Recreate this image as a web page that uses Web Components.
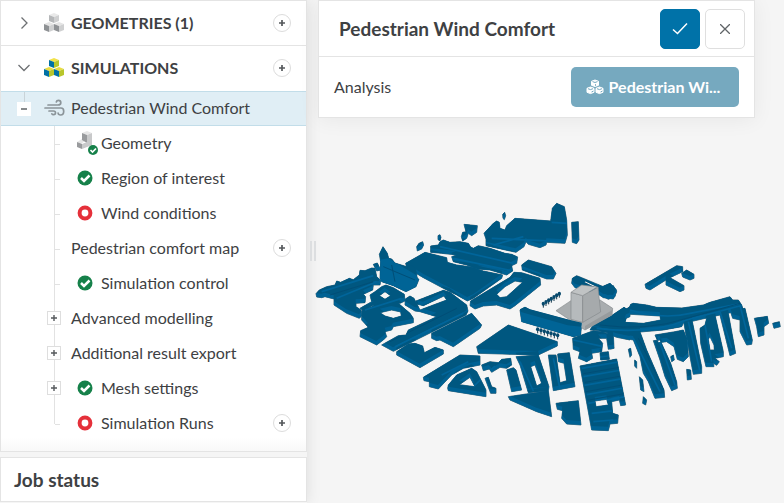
<!DOCTYPE html>
<html lang="en">
<head>
<meta charset="utf-8">
<title>Pedestrian Wind Comfort</title>
<style>
html, body { height: 100%; }
body { margin: 0; background: #f5f5f5; color: #3e4143; font: 16px/20px Lato, "Liberation Sans", sans-serif; }
</style>
</head>
<body>
<sim-workbench>
  <side-panel slot="side">
    <tree-section label="GEOMETRIES (1)" icon="cubes-grey" add></tree-section>
    <tree-section label="SIMULATIONS" icon="cubes-color" open add>
      <tree-row label="Pedestrian Wind Comfort" icon="wind" toggle="minus" root></tree-row>
      <tree-row label="Geometry" icon="geometry"></tree-row>
      <tree-row label="Region of interest" icon="ok"></tree-row>
      <tree-row label="Wind conditions" icon="todo"></tree-row>
      <tree-row label="Pedestrian comfort map" add></tree-row>
      <tree-row label="Simulation control" icon="ok"></tree-row>
      <tree-row label="Advanced modelling" toggle="plus"></tree-row>
      <tree-row label="Additional result export" toggle="plus"></tree-row>
      <tree-row label="Mesh settings" icon="ok" toggle="plus"></tree-row>
      <tree-row label="Simulation Runs" icon="todo" add last></tree-row>
    </tree-section>
  </side-panel>
  <job-status slot="side">Job status</job-status>
  <city-model slot="view"></city-model>
  <settings-panel slot="overlay" heading="Pedestrian Wind Comfort">
    <setting-field label="Analysis">Pedestrian Wi...</setting-field>
  </settings-panel>
</sim-workbench>

<script>
const cube = (x, y, top, left, right) =>
  `<path fill="${top}" d="M${x} ${y + 2}l5-2 5 2-5 2z"/><path fill="${left}" d="M${x} ${y + 2}l5 2v6l-5-2z"/><path fill="${right}" d="M${x + 5} ${y + 4}l5-2v6l-5 2z"/>`;
const cubes = (a, b) => `<svg width="20" height="20" viewBox="0 0 20 20" aria-hidden="true">${cube(5, 0, ...a)}${cube(0, 9, ...b)}${cube(10, 9, ...b)}</svg>`;
const tick = `<circle cx="8" cy="8" r="7.500" fill="#16814a"/><path d="M4 8l3 3 5.500-5.500" fill="none" stroke="#fff" stroke-width="2.500"/>`;
const ICONS = {
  'cubes-grey': cubes(['#e9e9e9', '#b5b7b9', '#cfd0d1'], ['#e4e4e4', '#8f9295', '#cfd0d1']),
  'cubes-color': cubes(['#f2e24a', '#0071a5', '#b8c62c'], ['#e9dc42', '#0071a5', '#b8c62c']),
  wind: `<svg width="21" height="18" viewBox="0 0 21 18" fill="none" stroke="#8b9499" stroke-width="1.700" stroke-linecap="round" aria-hidden="true"><path d="M4 6h10c2 0 2.800-1 2.800-2.300S15.800 1.300 14.500 1.300s-2 .7-2.200 1.700M1 9h16c1.800 0 2.700 1.300 2.700 3.300S18.500 16 16.600 16c-1.500 0-2.400-.8-2.500-2M5 12h4.500c1.200 0 2 .8 2 1.800s-.8 1.900-1.900 1.900c-.8 0-1.400-.3-1.700-.9"/></svg>`,
  geometry: `<svg width="22" height="24" viewBox="0 0 22 24" aria-hidden="true"><path fill="#e6e6e6" d="M5 2l5-2 5 2-5 2zM0 11l5-3 3 2-4 3z"/><path fill="#999b9d" d="M5 2l5 2v8l-5-3zM0 11l5 2v5l-5-2z"/><path fill="#c8c9ca" d="M10 4l5-2v12l-10 4v-5l5-2z"/><circle cx="16" cy="19" r="5" fill="#16814a"/><path d="M13.500 19l2 2 3.500-3.500" fill="none" stroke="#fff" stroke-width="1.700"/></svg>`,
  ok: `<svg width="16" height="16" viewBox="0 0 16 16" aria-hidden="true">${tick}</svg>`,
  todo: `<svg width="16" height="16" viewBox="0 0 16 16" aria-hidden="true"><circle cx="8" cy="8" r="5.400" fill="#fff" stroke="#e5303a" stroke-width="4"/></svg>`
};
const PLUS = `<svg width="8" height="8" viewBox="0 0 8 8" aria-hidden="true"><path d="M1 4h6M4 1v6" stroke="#55595c" stroke-width="1.400"/></svg>`;
const ADD = `<button class="add" aria-label="Add">${PLUS}</button>`;
const BASE = `
  :host { display: block; box-sizing: border-box; }
  *, *::before, *::after { box-sizing: border-box; }
  svg { display: block; flex: none; }
  button { font: inherit; color: inherit; margin: 0; padding: 0; display: flex; align-items: center; justify-content: center; cursor: pointer; }
  .add { width: 18px; height: 18px; border: 1px solid #dcdcdc; border-radius: 50%; background: #fff; margin-left: auto; flex: none; }
  .add path { stroke-width: 1.700; }
`;
function define(name, css, html) {
  customElements.define(name, class extends HTMLElement {
    connectedCallback() {
      if (this.shadowRoot) return;
      this.attachShadow({ mode: 'open' }).innerHTML = `<style>${BASE}${css}</style>${html(this)}`;
    }
  });
}

define('sim-workbench', `
  :host { display: flex; height: 100vh; overflow: hidden; }
  .side { width: 307px; flex: none; display: flex; flex-direction: column; gap: 5px; padding-bottom: 1px; box-shadow: 0 0 14px #0000001a; }
  main { position: relative; flex: 1; min-width: 0; }
  .handle { position: absolute; left: 3px; top: 48%; width: 6px; height: 20px; border: solid #dcdee0; border-width: 0 2px; }
  .overlay { position: absolute; top: 0; left: 11px; right: 29px; }
`, () => `<aside class="side"><slot name="side"></slot></aside>
  <main><slot name="view"></slot><div class="handle"></div><div class="overlay"><slot name="overlay"></slot></div></main>`);

define('side-panel', `
  :host { flex: 1; background: linear-gradient(#fff 97%, #f8f8f8); border: 1px solid #e4e4e4; }
`, () => `<nav aria-label="Project"><slot></slot></nav>`);

define('tree-section', `
  header { display: flex; align-items: center; height: 45px; padding: 0 15px 1px 16px; }
  :host(:not([open])) header { border-bottom: 1px solid #e4e4e4; padding-bottom: 0; }
  h2 { margin: 0 0 0 7px; font: inherit; font-weight: 700; white-space: nowrap; }
  .chevron { width: 14px; height: 14px; border: 0; background: none; margin-right: 13px; }
`, el => `<header><button class="chevron" aria-label="Toggle ${el.getAttribute('label')}"><svg width="14" height="14" viewBox="0 0 14 14"><path d="${el.hasAttribute('open') ? 'M1.500 4l5.500 5.500L12.500 4' : 'M4.500 1.500L10 7l-5.500 5.500'}" fill="none" stroke="#6d7073" stroke-width="1.300"/></svg></button>${ICONS[el.getAttribute('icon')]}<h2>${el.getAttribute('label')}</h2>${ADD}</header><slot></slot>`);

define('tree-row', `
  :host { height: 35px; }
  .row { position: relative; display: flex; align-items: center; height: 100%; padding: 0 15px 1px 70px; }
  .row::before { content: ""; position: absolute; left: 53px; top: 0; bottom: 0; width: 1px; background: #e2e2e2; }
  .row::after { content: ""; position: absolute; left: 54px; top: 50%; width: 5px; height: 1px; background: #e2e2e2; }
  :host([last]) .row::before { bottom: 50%; }
  .toggle { position: absolute; z-index: 1; left: 46px; top: 10px; width: 14px; height: 14px; border: 1px solid #dedede; background: #fff; }
  .icon { position: relative; width: 30px; height: 24px; display: flex; align-items: center; padding-left: 6px; flex: none; }
  .label { white-space: nowrap; }
  :host([root]) .row { background: #e0eef5; border: solid #c2dde9; border-width: 1px 0; padding-left: 43px; }
  :host([root]) .row::before { left: 23px; bottom: 50%; background: #c9d3d8; }
  :host([root]) .row::after { display: none; }
  :host([root]) .toggle { left: 16px; border-color: #fff; }
  :host([root]) .icon { width: 27px; padding: 0; }
`, el => {
  const icon = el.getAttribute('icon'), toggle = el.getAttribute('toggle'), label = el.getAttribute('label');
  return `<div class="row">${toggle ? `<button class="toggle" aria-label="Toggle ${label}">${toggle === 'plus' ? PLUS : PLUS.replace('M4 1v6', '')}</button>` : ''}
    ${icon ? `<span class="icon">${ICONS[icon]}</span>` : ''}<span class="label">${label}</span>${el.hasAttribute('add') ? ADD : ''}</div>`;
});

define('job-status', `
  :host { background: #fff; border: 1px solid #e4e4e4; padding: 10px 13px 9px; flex: none; }
  h2 { margin: 0; font-size: 19px; line-height: 24px; }
`, () => `<h2><slot></slot></h2>`);

define('settings-panel', `
  :host { background: #fff; border: 1px solid #e4e4e4; box-shadow: 0 2px 20px #0000000f; }
  header { display: flex; align-items: center; gap: 5px; height: 56px; padding: 0 9px 0 20px; border-bottom: 1px solid #e4e4e4; }
  h1 { flex: 1; margin: 0; font-size: 19px; line-height: 24px; white-space: nowrap; }
  button { width: 40px; height: 40px; border: 1px solid #dfdfdf; border-radius: 5px; background: #fff; }
  .apply { background: #0072a8; border-color: #0072a8; }
`, el => `<header><h1>${el.getAttribute('heading')}</h1>
  <button class="apply" aria-label="Apply"><svg width="16" height="14" viewBox="0 0 16 14"><path d="M1 7.500l4.500 4L15 1.500" fill="none" stroke="#fff" stroke-width="1.500"/></svg></button>
  <button aria-label="Close"><svg width="10" height="10" viewBox="0 0 10 10"><path d="M0 0l10 10M10 0L0 10" stroke="#606467" stroke-width="1.300"/></svg></button></header><slot></slot>`);

define('setting-field', `
  :host { display: flex; align-items: center; justify-content: space-between; height: 60px; padding: 0 15px; }
  button { gap: 5px; width: 168px; height: 40px; padding: 0 4px 0 0; border: 0; border-radius: 5px; background: #76a9bf; color: #fff; font-weight: 700; }
  .text { white-space: nowrap; }
`, el => `<span id="name">${el.getAttribute('label')}</span><button aria-describedby="name"><svg width="18" height="16" viewBox="0 0 18 16"><g fill="#fff" stroke="#fff" stroke-linejoin="round"><path d="M9 1l3.500 1.300v4L9 7.500 5.500 6.300v-4zM4.500 8L8 9.300v4l-3.500 1.300L1 13.300v-4zM13.500 8L17 9.300v4l-3.500 1.300L10 13.300v-4z"/></g><path d="M6.500 2.600L9 3.500l2.500-.9M9.500 5.200v1.600M2 9.700l2.500.9 2.500-.9M11 9.700l2.500.9 2.500-.9M5.500 13l2-1M14.500 13l2-1" stroke="#76a9bf" fill="none"/></svg><span class="text"><slot></slot></span></button>`);

/* Building footprints, grouped by district: origin, outlines and courtyards in thirds of a pixel. */
const DISTRICTS = [
  [0, 0, `320,155 327,145 338,140 341,150 335,162 322,168|384,122 390,119 393,127 390,137 384,134
   |362,153 385,150 390,140 400,135 420,142 450,140 475,145 482,156 490,160 505,152 540,160 585,175 605,178 623,186 620,205 605,212 608,228 590,240 540,225 500,222 470,210 430,200 425,185 440,180 395,175 362,172
   |287,205 345,172 410,188 412,202 440,210 480,215 520,228 578,240 575,250 490,310 472,318 440,300 400,280 340,248 290,218
   |18,296 28,285 50,275 75,270 80,258 92,262 118,250 130,254 148,240 150,226 165,227 185,219 195,220 200,245 212,256 210,270 190,270 188,285 160,298 167,305 165,323 138,325 138,335 153,345 155,363 148,370 110,355 72,330 72,312 45,305 35,308 20,306
   |180,300 195,290 215,275 228,270 250,278 283,298 285,318 270,325 240,325 225,340 190,330 160,347 150,340 185,320;208,302 225,290 242,302 225,313
   |286,312 300,303 312,310 330,345 410,315 402,303 340,332 320,327 318,318 400,286 420,292 470,330 474,348 468,360 250,469 215,450 265,422 288,420 295,405 380,365 330,350 315,348 285,330`],
  [0, 0, `210,250 212,200 208,178 219,155 232,175 236,190 245,192 255,204 290,215 318,230 322,250 327,253 318,275 288,290 250,272 215,260|190,208 202,204 212,225 200,228`],
  [450, 0, `128,58 134,52 137,62 133,74 129,70|12,88 52,92 50,112 35,122 25,115 20,130 8,138 4,125 8,112 18,110
   |72,115 100,85 110,78 118,82 120,100 135,105 140,92 165,70 272,78 277,40 290,25 313,35 320,75 322,120 315,145 260,142 258,150 240,158 205,148 198,140 192,155 168,172 78,152 78,132
   |335,82 355,80 357,135 350,146 337,142|185,210 205,195 275,215 288,235 280,252 260,252 187,225
   |32,318 150,247 162,232 185,233 240,250 242,270 165,332 150,342 110,330 70,333 45,342 30,332;110,298 135,275 165,258 188,262 140,305 120,308
   |337,250 350,242 365,248 430,275 460,272 470,290 460,312 430,308 415,298 345,278 335,265;372,262 376,258 434,286 430,290`],
  [900, 180, `105,88 200,32 218,35 218,50 180,68 222,92 222,105 210,110 168,90 168,75 120,105 108,100|215,55 230,45 252,58 252,70 240,75 218,66
   |-50,210 0,185 42,157 55,165 62,148 70,145 110,150 140,157 216,159 280,150 300,142 360,125 368,135 385,135 395,150 400,165 330,180 220,205 215,215 160,225 80,232 0,228 -60,225;45,202 50,185 62,178 150,183 152,195 100,205
   |433,190 472,184 476,205 462,215 462,240 445,245 440,215|488,205 508,200 511,215 492,220`],
  [870, 345, `60,62 118,60 140,120 192,240 194,262 165,265 145,215 130,190 120,140 108,110 100,90 70,85|160,92 180,90 212,160 230,215 232,235 215,242 195,200 180,150
   |165,75 225,65 250,60 262,90 265,140 250,155 232,148 222,110 200,95 175,98|250,30 275,25 305,170 305,190 280,193 268,130
   |300,55 315,45 320,25 345,15 370,125 370,140 345,145 358,155 350,166 340,160 342,170 318,170 302,100;325,88 330,80 342,105 343,120 330,120
   |360,15 385,10 407,130 390,137|390,0 435,-5 457,90 455,103 440,105 420,65 420,30 398,25
   |85,118 92,115 95,135 90,142|104,150 110,155 110,175 104,168|118,200 128,210 132,245 122,240|130,260 140,270 137,285 128,280|260,178 272,180 274,208 262,210|212,140 220,135 223,150 215,155|22,70 40,72 42,115 30,117`],
  [60, 285, `95,62 125,50 155,30 205,40 240,70 250,85 250,98 200,108 190,110 185,120 165,125 170,140 160,150 140,165 90,140 92,122 115,112 95,90;150,68 185,60 212,66 214,78 190,85 165,78
   |305,130 425,70 455,105 450,115 370,170 330,150 320,152 305,145
   |200,185 235,162 255,160 278,168 283,188 315,172 340,180 340,192 270,233 200,195
   |280,262 390,195 450,198 450,225 400,235 365,255 325,297 298,290 298,275 282,272
   |353,295 355,285 380,255 425,235 440,245 468,300 468,320 355,302;388,284 420,262 435,290`],
  [480, 285, `150,60 165,52 180,60 300,92 335,100 332,135 310,140 155,95|20,170 115,105 262,155 262,168 205,195 25,190
   |35,225 60,215 85,218 95,208 122,205 125,225 110,235 90,232 65,247 58,237 40,242|45,265 55,262 65,290 78,295 78,310 62,310|110,240 130,233 138,240 155,300 125,305
   |138,200 205,195 237,290 235,302 175,308 150,225;182,230 195,225 215,280 200,288
   |235,195 258,195 270,278 290,272 282,220 265,215 263,192 298,188 315,290 250,302|115,320 235,302 245,380 200,365 120,330
   |258,340 325,332 333,405 290,402 275,385 278,362 262,358
   |330,228 440,207 467,345 452,347 448,330 425,335 428,370 445,375 443,400 420,402 415,422 365,420;375,333 410,328 415,345 378,350
   |308,145 370,122 415,128 432,175 415,178 410,145 385,145 398,160 395,185 365,190 368,205 350,215 325,205 330,185 310,178
   |388,105 440,75 480,50 480,80 440,97 480,100 480,150 440,142 388,122|390,188 415,185 418,208 392,210|385,-5 420,-20 440,0 435,20 415,28 390,15`]
];
const outline = points => 'M' + points.trim().replace(/\s+/g, ' L') + 'Z';
const shapes = DISTRICTS.map(([x, y, text], i) =>
  `<path id="d${i}" transform="translate(${x} ${y})" clip-rule="evenodd" fill-rule="evenodd" d="${text.split('|').map(s => s.split(';').map(outline).join('')).join('')}"/>`).join('');
const uses = DISTRICTS.map((_, i) => `<use href="#d${i}"/>`).join('');
const trees = (x, y, dx, dy) => Array.from({ length: 7 }, (_, i) =>
  `<path d="M${x + i * dx} ${y + i * dy}v12" stroke="#17384a" stroke-width="3"/><ellipse cx="${x + i * dx}" cy="${y + i * dy}" rx="5" ry="6" fill="#07496c"/>`).join('');

define('city-model', `
  :host { height: 100%; }
  svg { width: 100%; height: 100%; }
`, () => `<svg viewBox="307 0 477 503" role="img" aria-label="City model">
  <defs>${shapes}<clipPath id="all">${uses}</clipPath></defs>
  <g transform="translate(310 195) scale(.33333)">
    <g fill="#006294" stroke="#4f7383" stroke-width="3" stroke-linejoin="round">${uses}</g>
    <g fill="#006294">${uses}</g>
    <g clip-path="url(#all)">
      <g fill="#005780" transform="translate(-1 -12)">${uses}</g>
      <g fill="none" stroke="#00659a" stroke-width="5">
        <path fill="#006496" stroke="none" d="M205 195l30-5 92 55-8 35-32 12-80-35z"/>
        <path d="M35 290l155-48M80 310l120-50M165 345l110-35M255 455l205-100M390 155l220 50M430 190l170 36M545 130l220 10M640 125l-90 25M725 82l46 3"/>
        <path d="M815 520l115-20M820 545l115-20M823 571l115-20M830 599l110-20M835 625l110-20M845 655l70-8M850 680l60-5"/>
        <path d="M860 400q160 20 270-25l170-45M960 345q100 30 180 10l145-28M970 430l80 160M1045 430l50 140M1135 380l35 150M1185 390l20 110M1230 350l35 110M1290 330l25 100"/>
        <path d="M635 365l170 50M790 435l90 20M395 540l80-40M630 500l40 88M730 490l20 92M490 575l65-62"/>
      </g>
      <g fill="none" stroke="#004e76" stroke-width="3">
        <path d="M60 300l130-40M240 440l200-100M640 350l160 48M870 390q140 20 260-20l160-45M815 510l115-20M820 536l115-20M825 562l115-20M828 590l110-20M832 616l110-20M985 430l80 160M1155 390l25 130M220 215l95 40M245 210l10 50"/>
      </g>
    </g>
    <g transform="translate(480 285)" stroke="#858a8c" stroke-width="2">
      <path fill="#a9adaf" d="M258 62l45-30 87-2 38 25-2 20-81 45-45-30z"/>
      <path fill="#989c9e" stroke="none" d="M345 108l81-47v14l-81 45z"/>
      <path fill="#b6babc" d="M303 7l35 10v80l-35-9z"/>
      <path fill="#a6aaac" d="M338 17l46-25 8 74-54 31z"/>
      <path fill="#c0c3c4" d="M303 7l32-22 47 6-44 26z"/>
    </g>
    <path fill="#006496" d="M630 345l15-8 15 8 120 32 35 8-3 35-22 5-155-45z"/>
    <path fill="#005780" d="M630 343l15-8 15 8 120 32 35 8-2 12-40-4-140-40z"/>
    ${trees(700, 326, 8, -5)}${trees(683, 403, 10, 3)}
  </g>
</svg>`);
</script>
</body>
</html>
